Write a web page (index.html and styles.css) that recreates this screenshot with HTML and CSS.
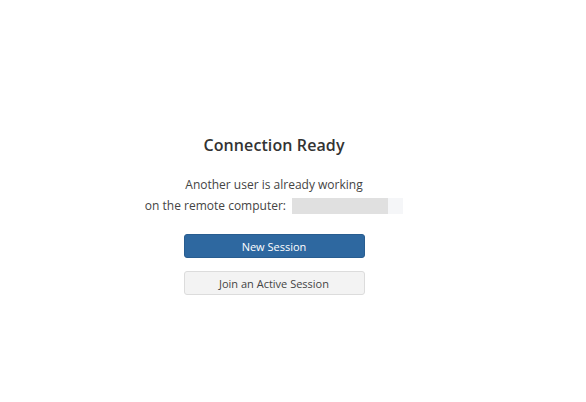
FILE: index.html
```html
<!DOCTYPE html>
<html lang="en">
<head>
    <meta charset="UTF-8">
    <title>Connection Ready</title>
    <link rel="stylesheet" href="styles.css">
</head>
<body>
    <div class="page">
        <div class="dialog">
            <h1 class="title">Connection Ready</h1>
            <p class="message">
                Another user is already working<br>
                on the remote computer: <span class="host"><span class="host-main"></span><span class="host-tail"></span></span>
            </p>
            <div class="actions">
                <button class="btn btn-primary">New Session</button>
                <button class="btn btn-secondary">Join an Active Session</button>
            </div>
        </div>
    </div>
</body>
</html>
```

FILE: styles.css
```css
body {
    margin: 0;
    font-family: 'Open Sans', 'Noto Sans', sans-serif;
    background: #fff;
    color: #333;
}

.page {
    width: 548px;
    padding-top: 134px;
}

.dialog {
    display: flex;
    flex-direction: column;
    align-items: center;
    text-align: center;
}

.title {
    margin: 0;
    font-size: 16px;
    font-weight: 600;
    line-height: 22px;
    color: #333;
    letter-spacing: 0.1px;
}

.message {
    margin: 18px 0 0;
    font-size: 12px;
    line-height: 21px;
    color: #444;
}

.host {
    display: inline-flex;
    vertical-align: -4px;
    height: 16px;
    margin-left: 3px;
}

.host-main {
    width: 96px;
    background: #e0e0e0;
}

.host-tail {
    width: 15px;
    background: #f5f6f8;
}

.actions {
    display: flex;
    flex-direction: column;
    gap: 13px;
    margin-top: 18px;
}

.btn {
    width: 181px;
    height: 24px;
    border-radius: 3px;
    font-family: inherit;
    font-size: 11px;
    padding: 0;
    cursor: pointer;
}

.btn-primary {
    background: #2e68a0;
    border: 1px solid #285d90;
    color: #fff;
}

.btn-secondary {
    background: #f3f3f3;
    border: 1px solid #dcdcdc;
    color: #444;
}
```
